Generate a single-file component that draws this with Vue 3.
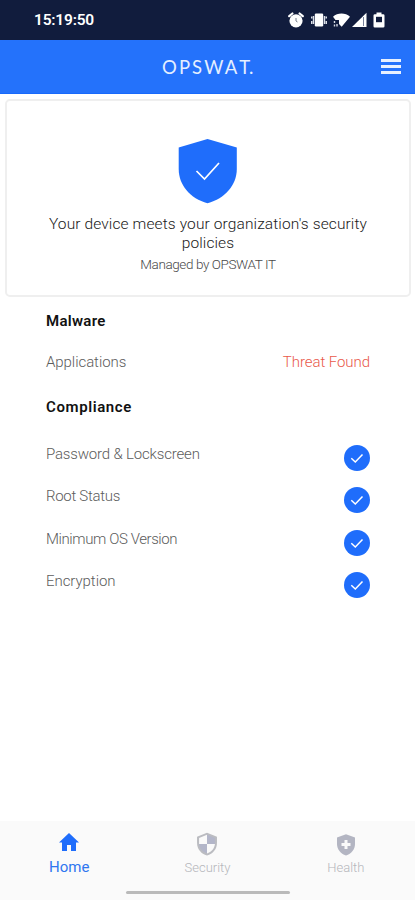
<script setup>
const checks = [
  { label: 'Password & Lockscreen', cls: 'password' },
  { label: 'Root Status', cls: 'root' },
  { label: 'Minimum OS Version', cls: 'version' },
  { label: 'Encryption', cls: 'encryption' },
]
</script>

<template>
  <div class="screen">
    <div class="status">
      <span class="clock">15:19:50</span>
      <div class="status-icons">
        <svg width="16" height="16" viewBox="0 0 16 16">
          <circle cx="8" cy="8.8" r="6.6" fill="#fff" />
          <path d="M1.200 4.200 4.400 1.500M14.800 4.200 11.600 1.500" stroke="#fff" stroke-width="2.200" stroke-linecap="round" />
          <path d="M8 6v3l1.500 1" stroke="#777e8c" stroke-width="1" fill="none" />
        </svg>
        <svg class="vibrate" width="16" height="16" viewBox="0 0 16 16">
          <rect x="3.800" y="1.500" width="8.400" height="13" rx="1.200" fill="#fff" />
          <path d="M2.500 4v8M13.500 4v8M.7 4.500v2M.7 9v3M15.300 4.500v2M15.300 9v3" stroke="#dce0e8" stroke-width="1.400" />
        </svg>
        <svg class="wifi" width="17" height="16" viewBox="0 0 17 16">
          <path d="M0 4.700C4.500 .3 12.500 .3 17 4.700L8.700 14.800 6 12V8H2.500Z" fill="#fff" />
          <path d="M1.500 9v2M1.500 12.500v2M4 12v2.500" stroke="#d7dbe5" stroke-width="1.400" />
        </svg>
        <svg class="signal" width="15" height="16" viewBox="0 0 15 16">
          <path d="M0 15 14.500 .8V15Z" fill="#fff" />
          <path d="M11.500 5v9" stroke="#77809a" stroke-width="1" />
        </svg>
        <svg width="12" height="16" viewBox="0 0 12 16">
          <path d="M3.500 .5h5v1.700h1.700Q11.500 2.200 11.500 3.500v10.700Q11.500 15.500 10.200 15.500H1.800Q.5 15.500 .5 14.200V3.500Q.5 2.200 1.800 2.200h1.700Z" fill="#fff" />
          <rect x="3" y="4.800" width="6" height="5.400" fill="#111c3d" />
        </svg>
      </div>
    </div>

    <header class="header">
      <span class="brand">OPSWA<span class="tight">T.</span></span>
      <div class="menu"><i></i><i></i><i></i></div>
    </header>

    <section class="card">
      <svg class="shield" width="60" height="66" viewBox="0 0 60 66">
        <path d="M29.500 1 58.800 9.500V31C58.800 47 47 60.500 29.500 65.300 12 60.500 .7 47 .7 31V9.500Z" fill="#1f6dfb" />
        <path d="M18.500 33 26.500 41 41 25" fill="none" stroke="#fff" stroke-width="1.700" />
      </svg>
      <p class="message"><span class="line1">Your device meets your organization's security</span><br /><span class="line2">policies</span></p>
      <p class="managed">Managed by OPSWAT IT</p>
    </section>

    <main class="content">
      <h2 class="malware">Malware</h2>
      <div class="row threat-row">
        <span class="label applications">Applications</span>
        <span class="threat">Threat Found</span>
      </div>
      <h2 class="compliance">Compliance</h2>
      <div class="checks">
        <div v-for="item in checks" :key="item.label" class="row">
          <span class="label" :class="item.cls">{{ item.label }}</span>
          <svg class="check" width="26" height="26" viewBox="0 0 26 26">
            <circle cx="13" cy="13" r="13" fill="#1f6dfb" />
            <path d="M7.300 13.200 11.300 17 18.500 9.500" fill="none" stroke="#fff" stroke-width="1.500" />
          </svg>
        </div>
      </div>
    </main>

    <footer class="footer">
      <nav class="tabs">
        <div class="tab active">
          <svg width="24" height="24" viewBox="0 0 24 24"><path d="M10 21v-6h4v6h5v-8.500h3L12 3 2 12.500h3V21z" fill="#1f6dfb" /></svg>
          <span>Home</span>
        </div>
        <div class="tab security">
          <svg width="26" height="26" viewBox="0 0 24 24">
            <path d="M12 1.500 21.200 5.200V11C21.200 16.500 17.500 21 12 22.500 6.500 21 2.800 16.500 2.800 11V5.200Z" fill="#bbbcc1" />
            <path d="M12 3.500V12H4.700V6.400Z" fill="#fafafa" />
            <path d="M12 12h7.300c-.5 4.300-3.300 7.500-7.300 8.700Z" fill="#fafafa" />
            <path d="M12 3.500 19.300 6.400V12H12Z" fill="#b3b6c9" />
            <path d="M4.700 12H12v8.700C8 19.500 5.200 16.300 4.700 12Z" fill="#b3b6c9" />
          </svg>
          <span>Security</span>
        </div>
        <div class="tab health">
          <svg width="24" height="24" viewBox="0 0 24 24">
            <path d="M12 1.200 21 4.500V11C21 16.500 17.500 20.500 12 22.500 6.500 20.500 3 16.500 3 11V4.500Z" fill="#b3b5c2" />
            <path d="M10.500 7h3V10h3v3h-3v3h-3v-3h-3v-3h3Z" fill="#fafafa" />
          </svg>
          <span>Health</span>
        </div>
      </nav>
      <div class="handle"></div>
    </footer>
  </div>
</template>

<style>
body { background: #fff; }
</style>

<style scoped>
* { box-sizing: border-box; }
.screen { width: 415px; height: 900px; display: flex; flex-direction: column; background: #fff; font-family: Roboto, sans-serif; overflow: hidden; }
p, h2 { margin: 0; }
svg { display: block; flex: none; }
.status { height: 40px; flex: none; background: #111c3d; display: flex; justify-content: space-between; padding: 0 30px 0 34px; }
.clock { color: #fff; font-size: 15.500px; font-weight: 600; line-height: 40px; letter-spacing: -.2px; }
.status-icons { display: flex; padding-top: 12px; }
.vibrate { margin-left: 7px; }
.wifi { margin: 0 2px 0 6px; }
.signal { margin-right: 6px; }
.header { height: 54px; flex: none; background: #2472fb; display: flex; align-items: center; justify-content: flex-end; border-bottom: 1px solid #1769fb; padding: 0 14px 0 162px; }
.brand { margin-right: auto; font: 400 18.500px Lato, sans-serif; letter-spacing: 2.100px; color: #e4efff; padding-top: 1px; }
.tight { letter-spacing: 0; }
.menu { width: 20px; display: grid; gap: 3px; }
.menu i { height: 3px; background: #e7f0ff; }
.card { height: 198px; flex: none; margin: 5px 4px 0 5px; border: 2px solid #efefef; border-radius: 5px; display: flex; flex-direction: column; align-items: center; padding-top: 37px; background: #fff; }
.message { margin-top: 11px; text-align: center; font-size: 15.500px; line-height: 19px; font-weight: 300; color: #202020; white-space: nowrap; }
.line1 { letter-spacing: .12px; }
.line2 { letter-spacing: .1px; }
.managed { margin-top: 2px; font-size: 13.500px; line-height: 18px; font-weight: 300; color: #484848; letter-spacing: -.4px; }
.content { padding: 14px 45px 0 46px; flex: 1; }
h2 { font-size: 15px; line-height: 20px; font-weight: 600; color: #111; }
.malware { letter-spacing: .3px; }
.row { display: flex; justify-content: space-between; }
.label, .threat { font-size: 15px; line-height: 20px; font-weight: 300; color: #5c5c5c; white-space: nowrap; }
.threat-row { margin-top: 21px; }
.threat { color: #e9584a; letter-spacing: -.06px; }
.compliance { margin-top: 25px; letter-spacing: .6px; }
.applications { letter-spacing: -.06px; }
.password { letter-spacing: -.17px; }
.root { letter-spacing: -.3px; }
.version { letter-spacing: -.41px; }
.encryption { letter-spacing: -.05px; }
.checks { display: grid; gap: 16.300px; margin-top: 27px; }
.checks .row { height: 26px; }
.check { margin-top: 1px; }
.footer { height: 79px; flex: none; background: #fafafa; display: flex; flex-direction: column; align-items: center; justify-content: space-between; padding-bottom: 6px; }
.tabs { display: grid; grid-template-columns: repeat(3, 1fr); width: 100%; }
.tab { height: 60px; display: flex; flex-direction: column; align-items: center; padding-top: 9px; color: #b5b6ba; font-size: 13px; font-weight: 300; }
.tab span { line-height: 18px; margin-top: 4px; }
.tab.active { color: #2f76f0; font-size: 15px; font-weight: 400; }
.tab.security { padding-top: 10px; }
.tab.security span { margin-top: 2px; }
.tab.health { padding-top: 12px; }
.tab.health span { margin-top: 2px; }
.handle { width: 164px; height: 3px; border-radius: 2px; background: #bababa; }
</style>
